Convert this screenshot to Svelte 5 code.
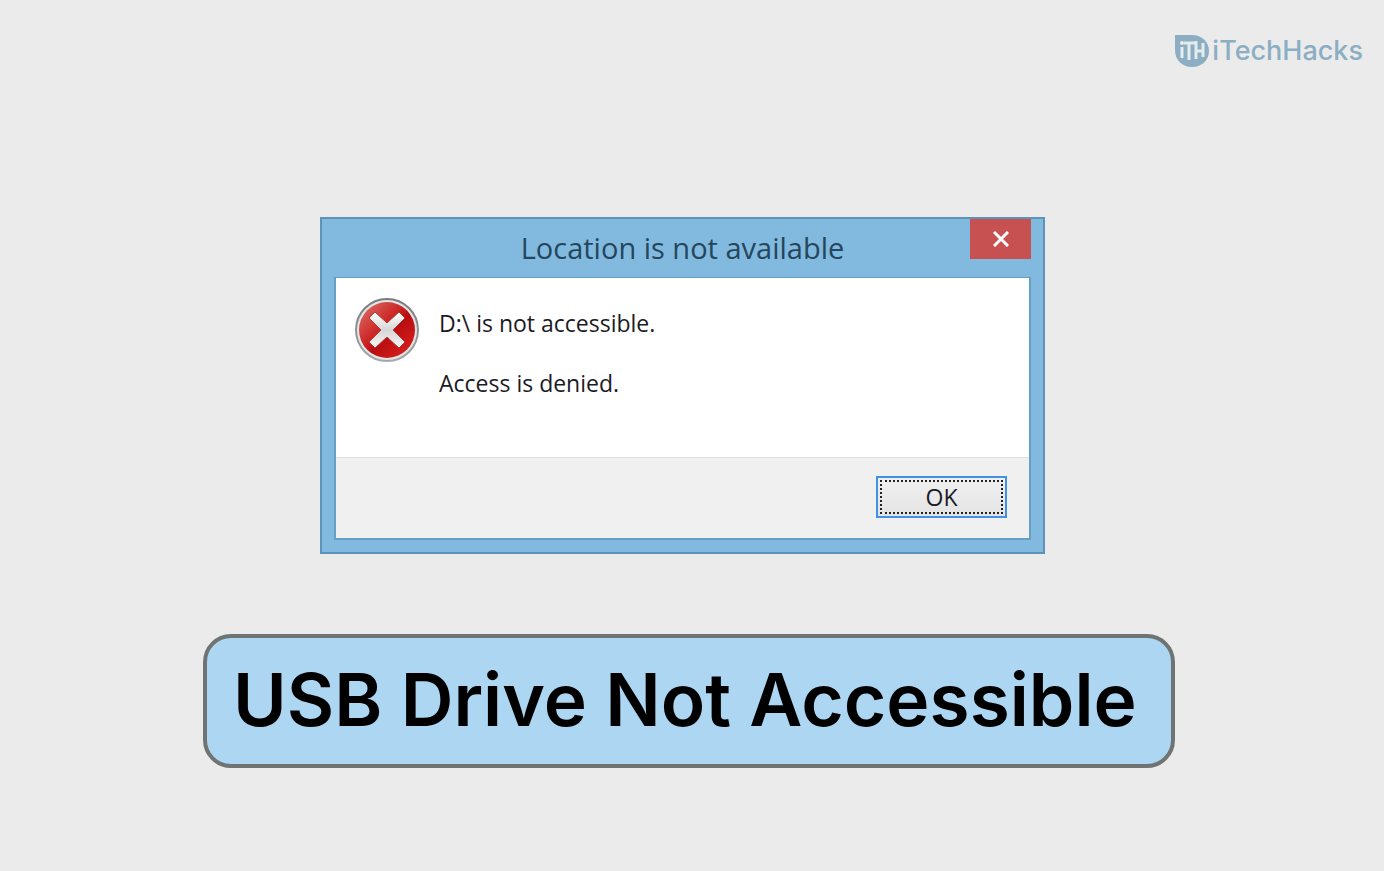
<script lang="ts">
	const messages: string[] = ['D:\\ is not accessible.', 'Access is denied.'];

	let isOpen = true;

	function closeDialog(): void {
		isOpen = false;
	}
</script>

<div class="page">
	<header class="site-header">
		<a href="/" class="brand" aria-label="iTechHacks">
			<svg class="brand-mark" viewBox="0 0 36 34" aria-hidden="true">
				<path
					d="M1 1h17c10 0 17 7 17 16s-7 16-17 16S1 26 1 16z"
					fill="#8caec3"
				/>
				<g fill="none" stroke="#e6ebee" stroke-width="3">
					<path d="M8 13v11M10 9h11M15 9v17M22 7v18M29 9v14M22 17h7" />
				</g>
				<circle cx="8" cy="9" r="2" fill="#e6ebee" />
			</svg>
			<span class="brand-name">iTechHacks</span>
		</a>
	</header>

	<main class="content">
		{#if isOpen}
			<div class="dialog" role="alertdialog" aria-labelledby="dialog-title" aria-describedby="dialog-text">
				<div class="title-bar">
					<h2 id="dialog-title">Location is not available</h2>
					<button class="close-button" aria-label="Close" on:click={closeDialog}>
						<svg viewBox="0 0 16 16" aria-hidden="true">
							<path d="M1 1l14 14M15 1L1 15" fill="none" stroke="#fff" stroke-width="3" />
						</svg>
					</button>
				</div>

				<div class="dialog-body">
					<div class="message">
						<svg class="error-icon" viewBox="0 0 64 64" aria-hidden="true">
							<defs>
								<linearGradient id="ring" x1="0" y1="0" x2="0" y2="1">
									<stop offset="0" stop-color="#777b7d" />
									<stop offset="1" stop-color="#a4a8aa" />
								</linearGradient>
								<linearGradient id="red" x1="0" y1="0" x2="1" y2="1">
									<stop offset="0" stop-color="#e07570" />
									<stop offset="0.45" stop-color="#c9211f" />
									<stop offset="0.55" stop-color="#b80d10" />
									<stop offset="1" stop-color="#e0241f" />
								</linearGradient>
								<linearGradient id="cross" x1="0" y1="0" x2="0" y2="1">
									<stop offset="0" stop-color="#fff" />
									<stop offset="0.5" stop-color="#d6d6d6" />
									<stop offset="1" stop-color="#f7f7f7" />
								</linearGradient>
							</defs>
							<circle cx="32" cy="32" r="31" fill="#e3e5e6" stroke="url(#ring)" stroke-width="2" />
							<circle cx="32" cy="32" r="28" fill="url(#red)" />
							<path
								d="M20 14l12 11 12-11 6 6-12 12 12 12-6 6-12-11-12 11-6-6 12-12-12-12z"
								fill="url(#cross)"
								stroke="#b53a3a"
								stroke-width="1"
								stroke-linejoin="round"
							/>
						</svg>
						<div class="message-text" id="dialog-text">
							{#each messages as message}
								<p>{message}</p>
							{/each}
						</div>
					</div>
					<div class="actions">
						<button class="ok-button" on:click={closeDialog}><span>OK</span></button>
					</div>
				</div>
			</div>
		{/if}

		<h1 class="banner">USB Drive Not Accessible</h1>
	</main>
</div>

<style>
	:global(body) {
		margin: 0;
		background: #ebebeb;
	}

	.page {
		min-height: 100vh;
		box-sizing: border-box;
		font-family: 'Open Sans', 'Noto Sans', sans-serif;
	}

	.site-header {
		display: flex;
		justify-content: flex-end;
		padding: 33px 21px 0;
	}

	.brand {
		display: flex;
		align-items: center;
		gap: 2px;
		color: #8caec3;
		text-decoration: none;
	}

	.brand-mark {
		width: 36px;
		height: 34px;
	}

	.brand-name {
		font-family: Inter, sans-serif;
		font-size: 27px;
		font-weight: 500;
		line-height: 36px;
	}

	.content {
		display: flex;
		flex-direction: column;
		align-items: center;
		gap: 80px;
		padding: 148px 6px 40px 0;
	}

	.dialog {
		width: 100%;
		max-width: 725px;
		box-sizing: border-box;
		margin-right: 13px;
		padding: 0 12px 12px;
		border: 2px solid #5d93b8;
		background: #82badf;
	}

	.title-bar {
		display: flex;
		align-items: flex-start;
		height: 58px;
	}

	.title-bar h2 {
		flex: 1;
		margin: 0;
		padding-left: 61px;
		color: #25465c;
		font-size: 29px;
		font-weight: 400;
		line-height: 58px;
		text-align: center;
	}

	.close-button {
		display: flex;
		align-items: center;
		justify-content: center;
		width: 61px;
		height: 40px;
		padding: 0;
		border: none;
		background: #c75050;
	}

	.close-button svg {
		width: 16px;
		height: 16px;
	}

	.dialog-body {
		border: 2px solid #669fc4;
		border-top-width: 1px;
		background: #fff;
	}

	.message {
		display: flex;
		gap: 20px;
		min-height: 179px;
		box-sizing: border-box;
		padding: 20px 19px;
	}

	.error-icon {
		flex: none;
		width: 64px;
		height: 64px;
	}

	.message-text p {
		margin: 10px 0 30px;
		color: #1b1b25;
		font-size: 23px;
		line-height: 30px;
	}

	.actions {
		display: flex;
		justify-content: flex-end;
		padding: 18px 22px 20px;
		border-top: 1px solid #dedede;
		background: #f0f0f0;
	}

	.ok-button {
		width: 131px;
		height: 42px;
		padding: 2px;
		border: 2px solid #3f92e4;
		background: linear-gradient(#f0f0f0, #e4e4e4);
		color: #1b1b25;
		font: inherit;
		font-size: 23px;
	}

	.ok-button span {
		display: block;
		border: 2px dotted #222;
		line-height: 30px;
	}

	.banner {
		box-sizing: border-box;
		width: 100%;
		max-width: 972px;
		margin: 0;
		padding: 13px 26px 15px;
		border: 4px solid #6f7472;
		border-radius: 28px;
		background: #acd6f1;
		color: #000;
		font-family: Inter, sans-serif;
		font-size: 73px;
		font-weight: 600;
		line-height: 98px;
	}
</style>
